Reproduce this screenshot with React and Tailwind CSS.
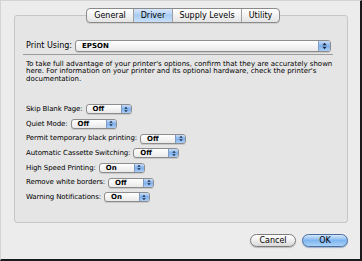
import React from 'react'

const FONT = { fontFamily: '"DejaVu Sans", "Liberation Sans", sans-serif' }

const OPTIONS = [
  { label: 'Skip Blank Page:', value: 'Off' },
  { label: 'Quiet Mode:', value: 'Off' },
  { label: 'Permit temporary black printing:', value: 'Off' },
  { label: 'Automatic Cassette Switching:', value: 'Off' },
  { label: 'High Speed Printing:', value: 'On' },
  { label: 'Remove white borders:', value: 'Off' },
  { label: 'Warning Notifications:', value: 'On' },
]

const TABS = ['General', 'Driver', 'Supply Levels', 'Utility']

function Arrows({ size = 5 }) {
  return (
    <svg width={size} height={size + 3} viewBox="0 0 6 9">
      <path d="M3 0.5 L5.5 3.5 L0.5 3.5 Z" fill="#1b2a44" />
      <path d="M3 8.5 L5.5 5.5 L0.5 5.5 Z" fill="#1b2a44" />
    </svg>
  )
}

function Popup({ value, className = '', bold = false, tall = false }) {
  return (
    <div
      className={`flex items-stretch rounded-[3px] border border-[#8d8d8d] bg-gradient-to-b from-[#ffffff] to-[#e9e9e9] shadow-[0_1px_0_#c9c9c9] overflow-hidden ${tall ? 'h-[12px]' : 'h-[10px]'} ${className}`}
    >
      <span className={`flex-1 pl-[6px] text-[7px] leading-[9px] text-black ${bold ? 'font-bold' : 'font-semibold'} ${tall ? 'pt-[1px]' : ''}`}>
        {value}
      </span>
      <span className={`flex items-center justify-center border-l border-[#7f9ac2] bg-gradient-to-b from-[#c9ddf6] via-[#7fb0ec] to-[#a9cdf5] ${tall ? 'w-[12px]' : 'w-[10px]'}`}>
        <Arrows size={tall ? 5 : 4} />
      </span>
    </div>
  )
}

export default function App() {
  return (
    <div
      className="w-[362px] h-[261px] bg-[#ececec] border-t border-l border-t-[#d4d4d4] border-l-[#d4d4d4] border-r-2 border-b-2 border-r-[#1a1a1a] border-b-[#1a1a1a] overflow-hidden"
      style={FONT}
    >
      <div className="pt-[14px] pl-[13px]">
        <div className="relative w-[334px] h-[208px] rounded-[3px] border border-[#c6c6c6] bg-[#e5e5e5]">
          {/* tab strip sits on the group box border */}
          <div className="absolute left-[71px] top-[-8px] flex h-[15px] rounded-[4px] border border-[#8a8a8a] bg-gradient-to-b from-[#ffffff] to-[#e4e4e4] shadow-[0_1px_0_#d0d0d0] overflow-hidden">
            {TABS.map((t, i) => (
              <div
                key={t}
                className={`flex items-center justify-center text-[8px] text-black ${i > 0 ? 'border-l border-[#a0a0a0]' : ''} ${t === 'Driver' ? 'bg-gradient-to-b from-[#d9e9fb] via-[#a9ccf2] to-[#c9e0f8]' : ''} ${i === 0 ? 'w-[46px]' : i === 1 ? 'w-[39px]' : i === 2 ? 'w-[69px]' : 'w-[38px]'}`}
              >
                {t}
              </div>
            ))}
          </div>

          <div className="pt-[24px] pl-[11px] pr-[14px]">
            <div className="flex items-center">
              <span className="text-[8px] text-black mr-[3px]">Print Using:</span>
              <Popup value="EPSON" bold tall className="w-[256px]" />
            </div>
            <div className="mt-[2px] ml-[-3px] w-[310px] h-px bg-[#9a9a9a]" />

            <p className="mt-[6px] w-[310px] text-[7px] leading-[7.4px] text-black">
              To take full advantage of your printer's options, confirm that they are accurately shown here. For information on your printer and its optional hardware, check the printer's documentation.
            </p>

            <div className="mt-[21px] flex flex-col gap-[4.7px]">
              {OPTIONS.map((o) => (
                <div key={o.label} className="flex items-center h-[10px]">
                  <span className="text-[7px] tracking-[-0.1px] text-black mr-[3px] whitespace-nowrap">{o.label}</span>
                  <Popup value={o.value} className="w-[46px]" />
                </div>
              ))}
            </div>
          </div>
        </div>
      </div>

      <div className="flex justify-end gap-[6px] pr-[12px] mt-[11px]">
        <button className="w-[46px] h-[13px] rounded-full border border-[#7b7b7b] bg-gradient-to-b from-[#ffffff] via-[#eeeeee] to-[#d8d8d8] text-[8px] leading-[11px] text-black shadow-[0_1px_1px_#bdbdbd]">
          Cancel
        </button>
        <button className="w-[46px] h-[13px] rounded-full border border-[#4b6e9e] bg-gradient-to-b from-[#d4e7fb] via-[#7fb6ef] to-[#a9d2f8] text-[8px] leading-[11px] text-black shadow-[0_1px_1px_#9db2cc]">
          OK
        </button>
      </div>
    </div>
  )
}
